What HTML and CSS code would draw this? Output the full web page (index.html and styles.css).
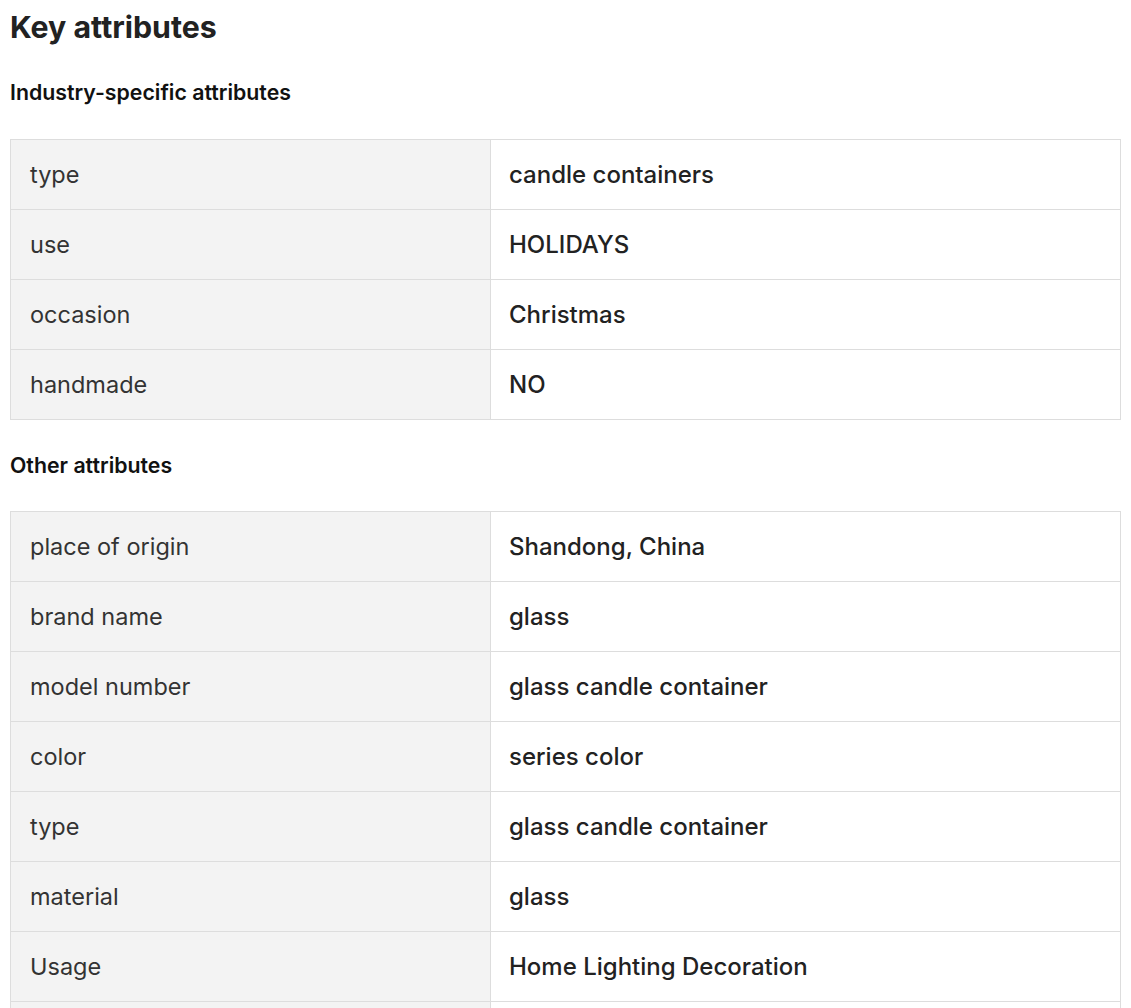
FILE: index.html
```html
<!DOCTYPE html>
<html>
<head>
<meta charset="utf-8">
<link rel="stylesheet" href="styles.css">
</head>
<body>
<div class="page">
  <h2 class="title">Key attributes</h2>
  <h3 class="subtitle">Industry-specific attributes</h3>
  <div class="attrs">
    <div class="row"><div class="key">type</div><div class="val">candle containers</div></div>
    <div class="row"><div class="key">use</div><div class="val">HOLIDAYS</div></div>
    <div class="row"><div class="key">occasion</div><div class="val">Christmas</div></div>
    <div class="row"><div class="key">handmade</div><div class="val">NO</div></div>
  </div>
  <h3 class="subtitle">Other attributes</h3>
  <div class="attrs">
    <div class="row"><div class="key">place of origin</div><div class="val">Shandong, China</div></div>
    <div class="row"><div class="key">brand name</div><div class="val">glass</div></div>
    <div class="row"><div class="key">model number</div><div class="val">glass candle container</div></div>
    <div class="row"><div class="key">color</div><div class="val">series color</div></div>
    <div class="row"><div class="key">type</div><div class="val">glass candle container</div></div>
    <div class="row"><div class="key">material</div><div class="val">glass</div></div>
    <div class="row"><div class="key">Usage</div><div class="val">Home Lighting Decoration</div></div>
    <div class="row"><div class="key">feature</div><div class="val">eco-friendly</div></div>
  </div>
</div>
</body>
</html>
```
FILE: styles.css
```css
html, body {
  margin: 0;
  padding: 0;
  background: #fff;
}
.page {
  padding: 0 10px;
  font-family: Inter, "Noto Sans", sans-serif;
  color: #222;
}
.title {
  margin: 0;
  padding-top: 9px;
  font-size: 30.3px;
  line-height: 36px;
  font-weight: 700;
  color: #222;
}
.subtitle {
  margin: 0;
  font-size: 21.3px;
  font-weight: 600;
  line-height: 24px;
  color: #111;
}
.title + .subtitle {
  margin-top: 35px;
}
.attrs {
  margin-top: 35px;
  border-top: 1px solid #ddd;
  border-left: 1px solid #ddd;
  border-right: 1px solid #ddd;
}
.attrs + .subtitle {
  margin-top: 33px;
}
.attrs + .subtitle + .attrs {
  margin-top: 34px;
}
.row {
  display: grid;
  grid-template-columns: 480px 1fr;
  height: 70px;
  border-bottom: 1px solid #ddd;
  box-sizing: border-box;
}
.key {
  background: #f3f3f3;
  border-right: 1px solid #ddd;
  padding: 0 19px;
  display: flex;
  align-items: center;
  font-size: 23.5px;
  font-weight: 400;
  color: #333;
}
.val {
  padding: 0 19px 0 18px;
  display: flex;
  align-items: center;
  font-size: 24px;
  font-weight: 500;
  color: #222;
}
```
